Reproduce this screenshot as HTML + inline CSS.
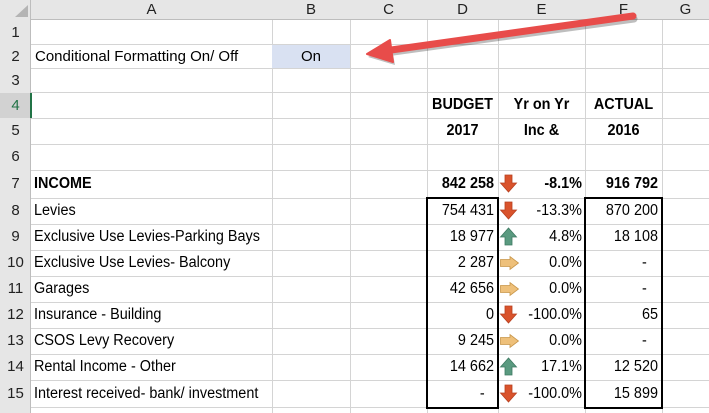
<!DOCTYPE html>
<html><head><meta charset="utf-8"><style>
*{margin:0;padding:0;box-sizing:border-box}
body{width:709px;height:413px;overflow:hidden;background:#fff;font-family:"Liberation Sans",Arial,sans-serif;position:relative;color:#000}
.a{position:absolute}
.hl{position:absolute;left:0;width:709px;height:1px;background:#d4d4d4}
.vl{position:absolute;top:0;height:413px;width:1px;background:#d4d4d4}
.ch{position:absolute;top:0;height:20px;line-height:20px;text-align:center;font-size:15px;color:#222}
.rh{position:absolute;left:0;width:31px;text-align:center;font-size:15px;color:#222}
.t{position:absolute;font-size:15.5px;white-space:nowrap;transform:scaleX(.93);transform-origin:left center}
.r{text-align:right;transform-origin:right center}
.c{transform-origin:center center}
.b{font-weight:bold}
</style></head><body>
<div class="vl" style="left:272px"></div><div class="vl" style="left:350px"></div><div class="vl" style="left:427px"></div><div class="vl" style="left:498px"></div><div class="vl" style="left:585px"></div><div class="vl" style="left:662px"></div>
<div class="hl" style="top:44px"></div><div class="hl" style="top:68px"></div><div class="hl" style="top:92px"></div><div class="hl" style="top:118px"></div><div class="hl" style="top:144px"></div><div class="hl" style="top:170px"></div><div class="hl" style="top:198px"></div><div class="hl" style="top:224px"></div><div class="hl" style="top:250px"></div><div class="hl" style="top:276px"></div><div class="hl" style="top:302px"></div><div class="hl" style="top:328px"></div><div class="hl" style="top:354px"></div><div class="hl" style="top:380px"></div><div class="hl" style="top:407px"></div>
<div class="a" style="left:0;top:0;width:709px;height:20px;background:#e6e6e6;border-bottom:1px solid #bdbdbd"></div>
<div class="a" style="left:0;top:0;width:31px;height:413px;background:#e6e6e6;border-right:1px solid #bdbdbd"></div>
<svg class="a" style="left:13px;top:4px" width="16" height="14"><polygon points="15,1 15,13 2,13" fill="#b4b4b4"/></svg>
<div class="ch" style="left:31px;width:241px">A</div><div class="ch" style="left:272px;width:78px">B</div><div class="ch" style="left:350px;width:77px">C</div><div class="ch" style="left:427px;width:71px">D</div><div class="ch" style="left:498px;width:87px">E</div><div class="ch" style="left:585px;width:77px">F</div><div class="ch" style="left:662px;width:47px">G</div>
<div class="a" style="left:0;top:93px;width:31px;height:25px;background:#d2d2d2"></div>
<div class="a" style="left:30px;top:93px;width:2px;height:25px;background:#217346"></div>
<div class="rh" style="top:24px">1</div><div class="rh" style="top:48px">2</div><div class="rh" style="top:72px">3</div><div class="rh" style="top:97px;color:#217346">4</div><div class="rh" style="top:122px">5</div><div class="rh" style="top:148px">6</div><div class="rh" style="top:175px">7</div><div class="rh" style="top:202px">8</div><div class="rh" style="top:228px">9</div><div class="rh" style="top:254px">10</div><div class="rh" style="top:280px">11</div><div class="rh" style="top:306px">12</div><div class="rh" style="top:332px">13</div><div class="rh" style="top:358px">14</div><div class="rh" style="top:385px">15</div>
<div class="a" style="left:35px;top:48px;font-size:15px;white-space:nowrap">Conditional Formatting On/ Off</div>
<div class="a" style="left:272px;top:45px;width:78px;height:23px;background:#d9e1f2"></div>
<div class="a" style="left:272px;width:78px;text-align:center;top:48px;font-size:15px">On</div>
<div class="t b c" style="left:427px;width:71px;text-align:center;top:96px">BUDGET</div>
<div class="t b c" style="left:498px;width:87px;text-align:center;top:96px">Yr on Yr</div>
<div class="t b c" style="left:585px;width:77px;text-align:center;top:96px">ACTUAL</div>
<div class="t b c" style="left:427px;width:71px;text-align:center;top:122px">2017</div>
<div class="t b c" style="left:498px;width:87px;text-align:center;top:122px">Inc &amp;</div>
<div class="t b c" style="left:585px;width:77px;text-align:center;top:122px">2016</div>
<div class="t b" style="left:34px;top:175px">INCOME</div>
<div class="t" style="left:34px;top:202px">Levies</div>
<div class="t" style="left:34px;top:228px">Exclusive Use Levies-Parking Bays</div>
<div class="t" style="left:34px;top:254px">Exclusive Use Levies- Balcony</div>
<div class="t" style="left:34px;top:280px">Garages</div>
<div class="t" style="left:34px;top:306px">Insurance - Building</div>
<div class="t" style="left:34px;top:332px">CSOS Levy Recovery</div>
<div class="t" style="left:34px;top:358px">Rental Income - Other</div>
<div class="t" style="left:34px;top:385px">Interest received- bank/ investment</div>
<div class="t r b" style="left:427px;width:67px;top:175px">842 258</div>
<div class="t r" style="left:427px;width:67px;top:202px">754 431</div>
<div class="t r" style="left:427px;width:67px;top:228px">18 977</div>
<div class="t r" style="left:427px;width:67px;top:254px">2 287</div>
<div class="t r" style="left:427px;width:67px;top:280px">42 656</div>
<div class="t r" style="left:427px;width:67px;top:306px">0</div>
<div class="t r" style="left:427px;width:67px;top:332px">9 245</div>
<div class="t r" style="left:427px;width:67px;top:358px">14 662</div>
<div class="t r" style="left:427px;width:67px;top:385px;padding-right:10px">-</div>
<div class="t r b" style="left:498px;width:84px;top:175px">-8.1%</div>
<div class="t r" style="left:498px;width:84px;top:202px">-13.3%</div>
<div class="t r" style="left:498px;width:84px;top:228px">4.8%</div>
<div class="t r" style="left:498px;width:84px;top:254px">0.0%</div>
<div class="t r" style="left:498px;width:84px;top:280px">0.0%</div>
<div class="t r" style="left:498px;width:84px;top:306px">-100.0%</div>
<div class="t r" style="left:498px;width:84px;top:332px">0.0%</div>
<div class="t r" style="left:498px;width:84px;top:358px">17.1%</div>
<div class="t r" style="left:498px;width:84px;top:385px">-100.0%</div>
<div class="t r b" style="left:585px;width:73px;top:175px">916 792</div>
<div class="t r" style="left:585px;width:73px;top:202px">870 200</div>
<div class="t r" style="left:585px;width:73px;top:228px">18 108</div>
<div class="t r" style="left:585px;width:73px;top:254px;padding-right:12px">-</div>
<div class="t r" style="left:585px;width:73px;top:280px;padding-right:12px">-</div>
<div class="t r" style="left:585px;width:73px;top:306px">65</div>
<div class="t r" style="left:585px;width:73px;top:332px;padding-right:12px">-</div>
<div class="t r" style="left:585px;width:73px;top:358px">12 520</div>
<div class="t r" style="left:585px;width:73px;top:385px">15 899</div>
<div class="a" style="left:426px;top:197px;width:73px;height:212px;border:2px solid #000"></div>
<div class="a" style="left:584px;top:197px;width:79px;height:212px;border:2px solid #000"></div>
<svg class="a" style="left:0;top:0" width="709" height="413">
<defs>
<g id="dn"><polygon points="5,0 12,0 12,8 16.5,8 8.5,17 0.5,8 5,8" fill="#d9532c" stroke="#b8401f" stroke-width="0.8"/></g>
<g id="up"><polygon points="5,17 12,17 12,9 16.5,9 8.5,0 0.5,9 5,9" fill="#5a9a80" stroke="#3e7a62" stroke-width="0.8"/></g>
<g id="rt"><polygon points="0.5,3.5 10,3.5 10,0.5 18.5,7 10,13.5 10,10.5 0.5,10.5" fill="#eec07a" stroke="#c8964a" stroke-width="0.8"/></g>
</defs>
<use href="#dn" x="500" y="175"/>
<use href="#dn" x="500" y="202"/>
<use href="#up" x="500" y="228"/>
<use href="#rt" x="500" y="256"/>
<use href="#rt" x="500" y="282"/>
<use href="#dn" x="500" y="306"/>
<use href="#rt" x="500" y="334"/>
<use href="#up" x="500" y="358"/>
<use href="#dn" x="500" y="385"/>
<g opacity="0.25" transform="translate(1,2)"><line x1="633" y1="17" x2="385" y2="51" stroke="#000" stroke-width="7" stroke-linecap="round"/><polygon points="367,55 390,41 394,63" fill="#000"/></g>
<line x1="633" y1="16" x2="384" y2="51" stroke="#e84c4a" stroke-width="7" stroke-linecap="round"/>
<polygon points="367,54 390,40 393,62" fill="#e84c4a" stroke="#e84c4a" stroke-width="2" stroke-linejoin="round"/>
</svg>
</body></html>
